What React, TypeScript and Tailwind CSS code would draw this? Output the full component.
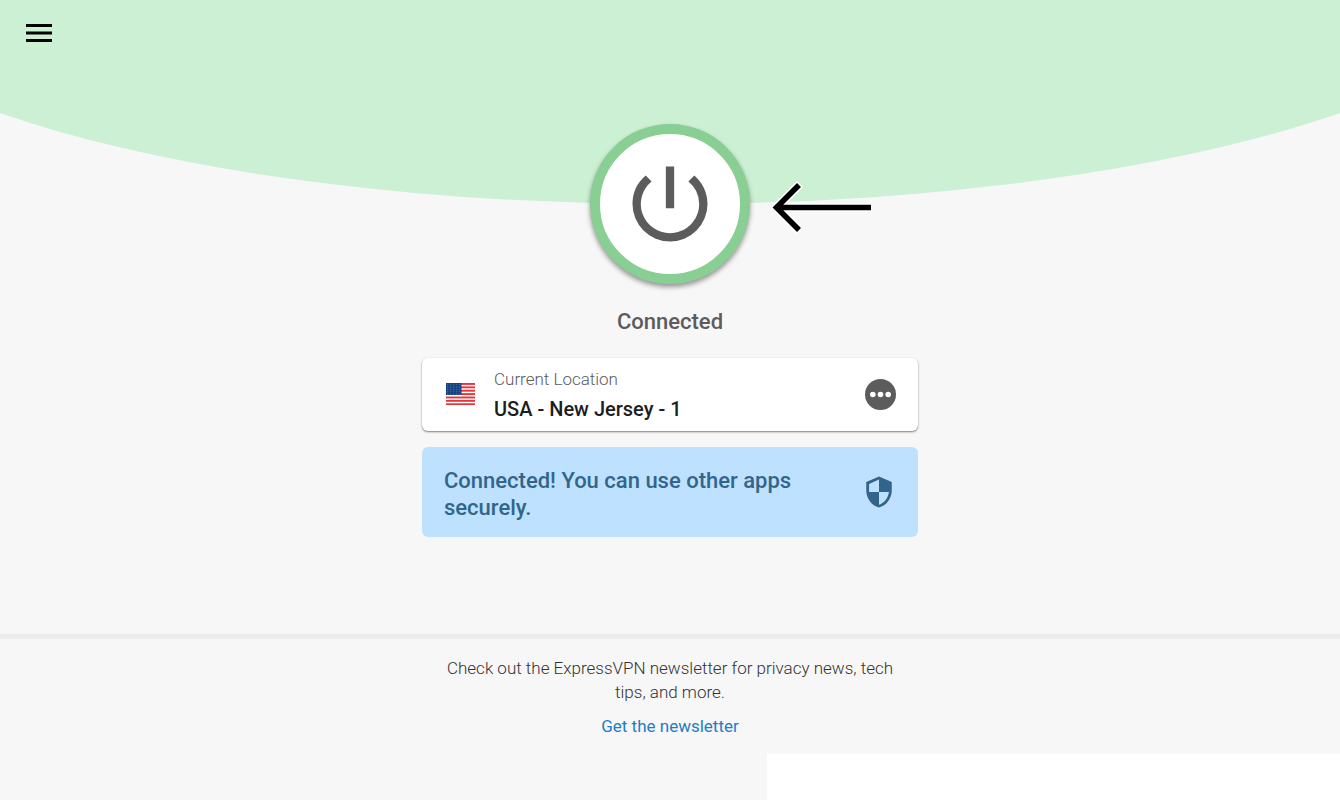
import { useState } from "react";
import { MdPowerSettingsNew, MdSecurity } from "react-icons/md";

function MenuIcon() {
  return (
    <svg viewBox="0 0 26 18" className="h-[18px] w-[26px]" aria-hidden="true">
      <path d="M0 0h26v3H0zM0 7.5h26v3H0zM0 15h26v3H0z" fill="#000" />
    </svg>
  );
}

function MoreIcon() {
  return (
    <svg viewBox="0 0 31 31" className="size-[31px]" aria-hidden="true">
      <circle cx="15.5" cy="15.5" r="15.5" fill="#5c5c5c" />
      <circle cx="7.8" cy="15.5" r="2.8" fill="#fff" />
      <circle cx="15.5" cy="15.5" r="2.8" fill="#fff" />
      <circle cx="23.2" cy="15.5" r="2.8" fill="#fff" />
    </svg>
  );
}

const starRows = [1.6, 4, 6.4, 8.8, 11];
const starColumns = [1.8, 4.8, 7.8, 10.8, 13.8];

function UsFlag() {
  return (
    <svg viewBox="0 0 29 22" className="h-[22px] w-[29px] shrink-0" role="img" aria-label="USA">
      <rect width="29" height="22" fill="#fff" />
      {[0, 1, 2, 3, 4, 5, 6].map((i) => (
        <rect key={i} y={i * 3.38} width="29" height="1.9" fill="#e5353b" />
      ))}
      <rect width="15.5" height="12" fill="#174480" />
      {starRows.map((y) =>
        starColumns.map((x) => <circle key={`${x}-${y}`} cx={x} cy={y} r="0.45" fill="#8fb0cc" />)
      )}
    </svg>
  );
}

// Callout arrow pointing at the power button
function PointerArrow() {
  return (
    <svg
      viewBox="0 0 104 56"
      className="absolute top-[55px] left-[180px] h-[56px] w-[104px]"
      fill="none"
      aria-hidden="true"
    >
      <path d="M102 28.5H6M30 5L6.5 28.5L30 52" stroke="#fff" strokeWidth="8.5" />
      <path d="M101 28.5H7M29 6L6.5 28.5L29 51" stroke="#000" strokeWidth="5.6" />
    </svg>
  );
}

export default function App() {
  const [connected, setConnected] = useState(true);

  return (
    <div className="relative flex min-h-screen flex-col overflow-hidden bg-[#f7f7f7] font-[Roboto,sans-serif]">
      {/* Curved backdrop */}
      <div className="absolute -top-[300px] -left-[15%] h-[504px] w-[130%] rounded-[50%] bg-[#ccf0d3]" />

      <header className="relative flex px-[26px] pt-6">
        <button type="button" aria-label="Menu">
          <MenuIcon />
        </button>
      </header>

      <main className="relative flex grow flex-col items-center px-4 pt-[82px]">
        <div className="relative">
          <button
            type="button"
            aria-label="Power"
            aria-pressed={connected}
            onClick={() => setConnected(!connected)}
            className="flex size-40 items-center justify-center rounded-full border-10 border-[#89ce92] bg-white text-[#5c5c5c] shadow-[0_3px_5px_rgba(0,0,0,0.4)]"
          >
            <MdPowerSettingsNew className="size-[100px]" />
          </button>
          <PointerArrow />
        </div>

        <h1 className="mt-6 text-[22px] leading-7 font-medium text-[#5c5c5c]">
          {connected ? "Connected" : "Not Connected"}
        </h1>

        <div className="mt-[22px] flex w-full max-w-[496px] items-center rounded-md bg-white pt-[6px] pr-[22px] pb-[7px] pl-6 shadow-[0_1px_2px_rgba(0,0,0,0.5)]">
          <UsFlag />
          <div className="ml-[19px] grow">
            <p className="text-[17px] leading-[30px] font-light text-[#5c5c5c]">Current Location</p>
            <p className="text-xl leading-[30px] font-medium text-[#1c1d21]">USA - New Jersey - 1</p>
          </div>
          <button type="button" aria-label="More options">
            <MoreIcon />
          </button>
        </div>

        <div className="mt-4 flex w-full max-w-[496px] items-center justify-between rounded-md bg-[#bde1ff] px-[22px] py-4 text-[#33658a]">
          <p className="max-w-[380px] pt-1 text-[22px] leading-[27px] font-medium">
            Connected! You can use other apps securely.
          </p>
          <MdSecurity className="size-[34px] shrink-0" />
        </div>
      </main>

      <footer className="relative border-t-5 border-[#ececec]">
        <div className="flex flex-col items-center px-4 pt-[17px] pb-4 text-center text-[17px] leading-6">
          <p className="max-w-[450px] font-light text-[#333]">
            Check out the ExpressVPN newsletter for privacy news, tech tips, and more.
          </p>
          <a href="#newsletter" className="mt-[10px] text-[#1f7cc7]">
            Get the newsletter
          </a>
        </div>
        <div className="ml-auto h-[46px] w-[573px] max-w-full bg-white" />
      </footer>
    </div>
  );
}
